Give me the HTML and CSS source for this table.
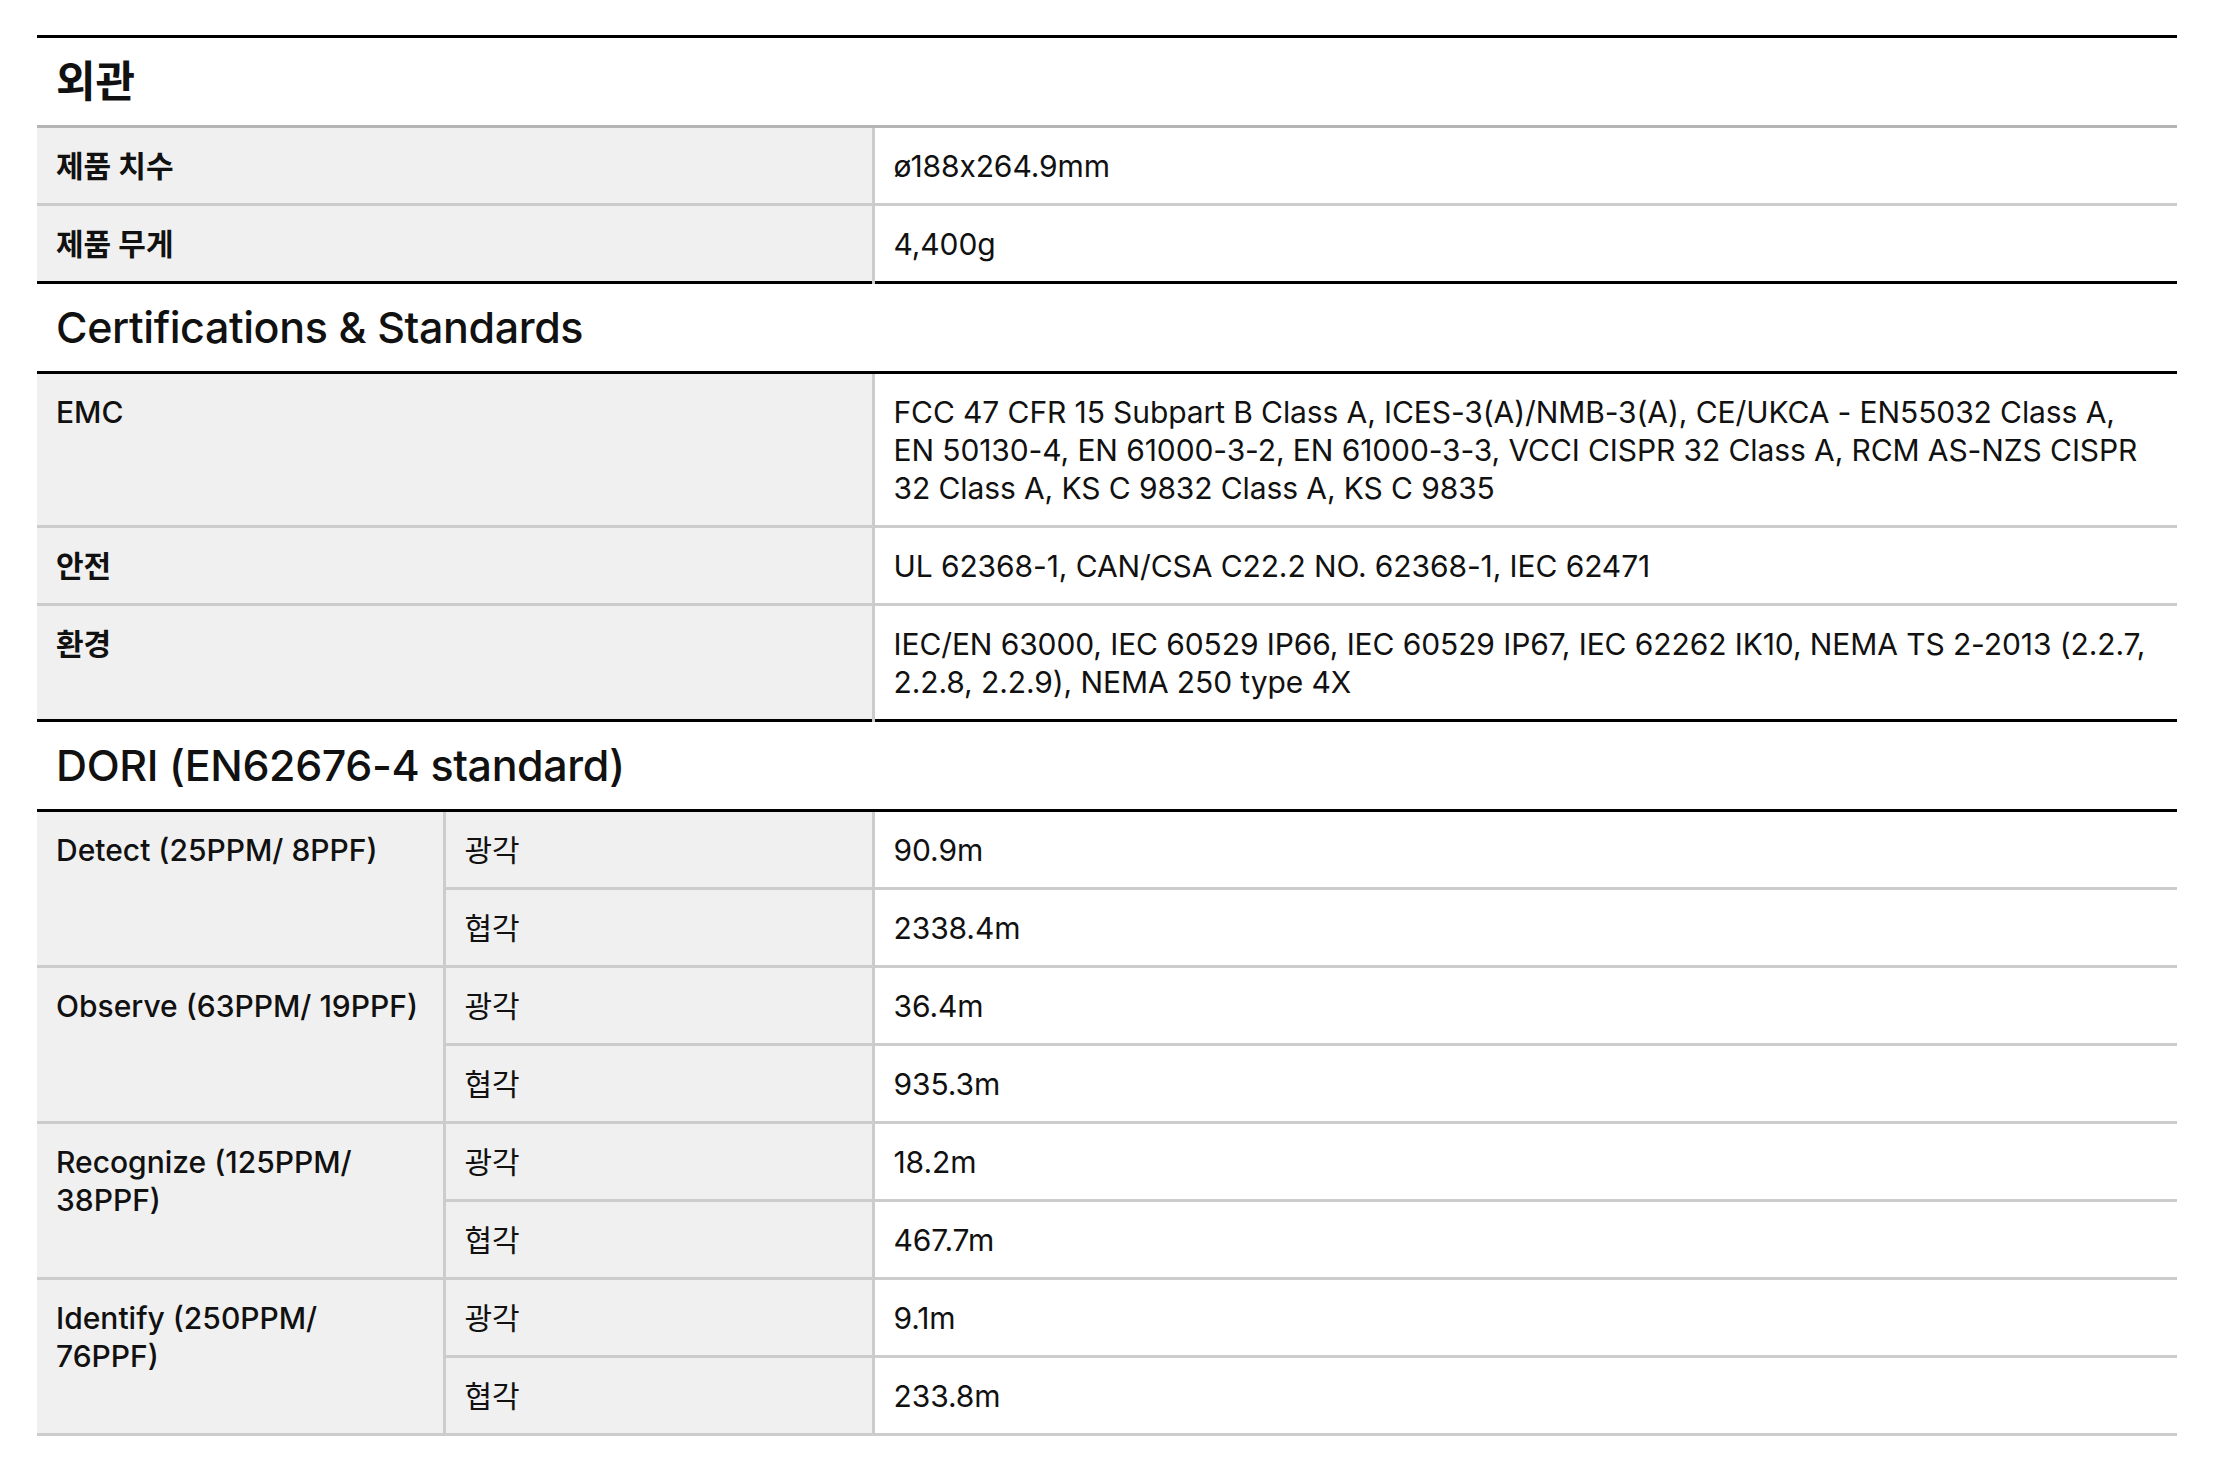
FILE: index.html
```html
<!DOCTYPE html>
<html lang="ko">
<head>
<meta charset="utf-8">
<title>Spec</title>
<link rel="stylesheet" href="styles.css">
</head>
<body>
<div class="page">
<table class="spec">
  <colgroup>
    <col class="c1">
    <col class="c2">
    <col class="c3">
  </colgroup>
  <tbody class="sec">
    <tr class="head head-soft"><th colspan="3" class="ko">외관</th></tr>
    <tr><td class="lbl ko" colspan="2">제품 치수</td><td class="val">ø188x264.9mm</td></tr>
    <tr><td class="lbl ko" colspan="2">제품 무게</td><td class="val">4,400g</td></tr>
  </tbody>
  <tbody class="sec">
    <tr class="head"><th colspan="3">Certifications &amp; Standards</th></tr>
    <tr><td class="lbl" colspan="2">EMC</td><td class="val">FCC 47 CFR 15 Subpart B Class A, ICES-3(A)/NMB-3(A), CE/UKCA - EN55032 Class A, EN 50130-4, EN 61000-3-2, EN 61000-3-3, VCCI CISPR 32 Class A, RCM AS-NZS CISPR 32 Class A, KS C 9832 Class A, KS C 9835</td></tr>
    <tr><td class="lbl ko" colspan="2">안전</td><td class="val">UL 62368-1, CAN/CSA C22.2 NO. 62368-1, IEC 62471</td></tr>
    <tr><td class="lbl ko" colspan="2">환경</td><td class="val">IEC/EN 63000, IEC 60529 IP66, IEC 60529 IP67, IEC 62262 IK10, NEMA TS 2-2013 (2.2.7, 2.2.8, 2.2.9), NEMA 250 type 4X</td></tr>
  </tbody>
  <tbody class="sec">
    <tr class="head"><th colspan="3">DORI (EN62676-4 standard)</th></tr>
    <tr><td class="lbl" rowspan="2">Detect (25PPM/ 8PPF)</td><td class="sub">광각</td><td class="val">90.9m</td></tr>
    <tr><td class="sub">협각</td><td class="val">2338.4m</td></tr>
    <tr><td class="lbl" rowspan="2">Observe (63PPM/ 19PPF)</td><td class="sub">광각</td><td class="val">36.4m</td></tr>
    <tr><td class="sub">협각</td><td class="val">935.3m</td></tr>
    <tr><td class="lbl" rowspan="2">Recognize (125PPM/ 38PPF)</td><td class="sub">광각</td><td class="val">18.2m</td></tr>
    <tr><td class="sub">협각</td><td class="val">467.7m</td></tr>
    <tr><td class="lbl" rowspan="2">Identify (250PPM/ 76PPF)</td><td class="sub">광각</td><td class="val">9.1m</td></tr>
    <tr><td class="sub">협각</td><td class="val">233.8m</td></tr>
  </tbody>
</table>
</div>
</body>
</html>
```
FILE: styles.css
```css
html, body {
  margin: 0;
  padding: 0;
  background: #ffffff;
}
body {
  font-family: Inter, "Noto Sans CJK KR", sans-serif;
  color: #111111;
}
.page {
  padding: 35px 38px 40px 37px;
}
.spec {
  width: 2140px;
  border-collapse: collapse;
  table-layout: fixed;
}
.c1 { width: 407px; }
.c2 { width: 429px; }
.spec th, .spec td {
  text-align: left;
  vertical-align: top;
  padding: 19px 19px 18px 19px;
  font-size: 30px;
  line-height: 38px;
  letter-spacing: -0.1px;
  border-bottom: 3px solid #cccccc;
}
.spec .sec:not(:last-child) tr:last-child td {
  border-bottom: 0;
}
.spec .head th {
  border-top: 3px solid #000000;
  border-bottom: 3px solid #000000;
  background: #ffffff;
  font-size: 43px;
  font-weight: 500;
  line-height: 53px;
  padding: 17px 19px 17px 19px;
  letter-spacing: -0.4px;
}
.spec .head th.ko {
  font-weight: 700;
  letter-spacing: 0;
}
.spec .head-soft th {
  border-bottom: 3px solid #b5b5b5;
}
.lbl {
  background: #f0f0f0;
  font-weight: 500;
  border-right: 3px solid #cccccc;
}
.spec td.lbl {
  padding-right: 21px;
  letter-spacing: 0;
}
.spec td.lbl.ko {
  font-weight: 700;
}
.sub {
  background: #f0f0f0;
  font-weight: 400;
  border-right: 3px solid #cccccc;
}
.val {
  background: #ffffff;
  font-weight: 400;
}
```
